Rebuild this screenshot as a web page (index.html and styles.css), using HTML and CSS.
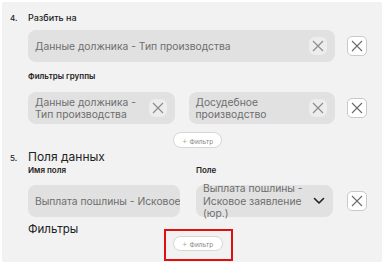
FILE: index.html
```html
<!DOCTYPE html>
<html lang="ru">
<head>
    <meta charset="UTF-8">
    <title>Группировка</title>
    <link rel="stylesheet" href="styles.css">
</head>
<body>
    <div class="panel">
        <!-- Разбить на -->
        <div class="step-title small">
            <span class="step-num">4.</span>
            <span>Разбить на</span>
        </div>
        <div class="field-row">
            <div class="select wide">
                <span class="select-text">Данные должника - Тип производства</span>
                <span class="chip-x"><svg width="18" height="18" viewBox="0 0 18 18"><path d="M4 4 L14 14 M14 4 L4 14" stroke="#8c8c8c" stroke-width="1.2"/></svg></span>
            </div>
            <button class="remove-btn"><svg width="18" height="18" viewBox="0 0 18 18"><path d="M4 4 L14 14 M14 4 L4 14" stroke="#6a6a6a" stroke-width="1.1"/></svg></button>
        </div>

        <div class="sub-label">Фильтры группы</div>
        <div class="field-row">
            <div class="pair">
                <div class="select">
                    <span class="select-text">Данные должника - Тип производства</span>
                    <span class="chip-x"><svg width="18" height="18" viewBox="0 0 18 18"><path d="M4 4 L14 14 M14 4 L4 14" stroke="#8c8c8c" stroke-width="1.2"/></svg></span>
                </div>
                <div class="select">
                    <span class="select-text">Досудебное производство</span>
                    <span class="chip-x"><svg width="18" height="18" viewBox="0 0 18 18"><path d="M4 4 L14 14 M14 4 L4 14" stroke="#8c8c8c" stroke-width="1.2"/></svg></span>
                </div>
            </div>
            <button class="remove-btn"><svg width="18" height="18" viewBox="0 0 18 18"><path d="M4 4 L14 14 M14 4 L4 14" stroke="#6a6a6a" stroke-width="1.1"/></svg></button>
        </div>
        <div class="add-wrap first">
            <button class="add-btn"><span class="plus">+</span> Фильтр</button>
        </div>

        <!-- Поля данных -->
        <div class="step-title big">
            <span class="step-num">5.</span>
            <span>Поля данных</span>
        </div>
        <div class="data-grid">
            <div class="sub-label">Имя поля</div>
            <div class="sub-label">Поле</div>
            <div></div>
            <div class="select input">
                <span class="input-text">Выплата пошлины - Исковое заявление (юр.)</span>
            </div>
            <div class="select tall">
                <span class="select-text">Выплата пошлины - Исковое заявление (юр.)</span>
                <svg class="chevron" width="12" height="8" viewBox="0 0 12 8">
                    <path d="M1.5 1.5 L6 6 L10.5 1.5" fill="none" stroke="#222" stroke-width="1.6" stroke-linecap="round" stroke-linejoin="round"/>
                </svg>
            </div>
            <button class="remove-btn"><svg width="18" height="18" viewBox="0 0 18 18"><path d="M4 4 L14 14 M14 4 L4 14" stroke="#6a6a6a" stroke-width="1.1"/></svg></button>
        </div>

        <div class="filters-title">Фильтры</div>
        <div class="add-wrap">
            <button class="add-btn marked"><span class="plus">+</span> Фильтр</button>
        </div>
    </div>
</body>
</html>
```
FILE: styles.css
```css
body {
    margin: 0;
    background-color: #ffffff;
    font-family: Inter, "Noto Sans", sans-serif;
    color: #222;
}

.panel {
    margin: 2px 0 0 2px;
    height: 260px;
    background-color: #f2f2f2;
    padding: 10px 15px 0 8px;
    box-sizing: border-box;
    overflow: hidden;
}

.step-title {
    display: flex;
    align-items: baseline;
}

.step-num {
    width: 18px;
    font-size: 8px;
    font-weight: 500;
}

.step-title.small {
    font-size: 9px;
    line-height: 12px;
    font-weight: 500;
}

.step-title.big {
    margin-top: 2px;
    font-size: 12px;
    line-height: 13px;
}

.sub-label {
    font-size: 8px;
    line-height: 10px;
    font-weight: 600;
    margin-left: 18px;
}

.field-row {
    display: flex;
    align-items: center;
    margin-left: 18px;
    gap: 12px;
}

.field-row + .sub-label {
    margin-top: 9px;
}

.step-title.small + .field-row {
    margin-top: 6px;
}

.sub-label + .field-row {
    margin-top: 11px;
}

.select {
    display: flex;
    align-items: center;
    height: 32px;
    padding: 0 8px 0 7px;
    box-sizing: border-box;
    background-color: #e1e1e1;
    border-radius: 8px;
    color: #6e6e6e;
    font-size: 10.3px;
    line-height: 12px;
}

.select.wide {
    width: 307px;
}

.select.tall {
    line-height: 12.5px;
}

.select-text {
    flex: 1;
}

.pair {
    display: flex;
    gap: 14px;
    width: 307px;
}

.pair .select {
    flex: 1;
}

.chip-x {
    display: flex;
    width: 18px;
    height: 18px;
    border-radius: 6px;
    background-color: #ededed;
}

.remove-btn {
    display: flex;
    align-items: center;
    justify-content: center;
    width: 20px;
    height: 20px;
    padding: 0;
    border: 1px solid #c9c9c9;
    border-radius: 5px;
    background-color: #fff;
}

.add-wrap {
    display: flex;
    justify-content: center;
    margin-left: 18px;
    width: 339px;
}

.add-wrap.first {
    margin-top: 8px;
}

.add-btn {
    height: 16px;
    padding: 0 8px;
    border: 1px solid #d6d6d6;
    border-radius: 8px;
    background-color: #fff;
    color: #888;
    font-size: 6.5px;
    font-family: inherit;
}

.plus {
    font-size: 9px;
    color: #aaa;
    font-weight: 300;
}

.add-btn.marked {
    position: relative;
    width: 50px;
    height: 15px;
}

.add-btn.marked::after {
    content: "";
    position: absolute;
    top: -8px;
    left: -10px;
    right: -11px;
    bottom: -11px;
    border: 2px solid #e01010;
}

.data-grid {
    display: grid;
    grid-template-columns: 152px 137px 20px;
    column-gap: 16px;
    align-items: center;
    margin-left: 18px;
}

.data-grid .sub-label {
    margin-left: 0;
    margin-bottom: 10px;
}

.data-grid .remove-btn {
    margin-left: -2px;
}

.input {
    overflow: hidden;
}

.input-text {
    white-space: nowrap;
}

.chevron {
    margin-left: 6px;
}

.filters-title {
    margin: 6px 0 0 18px;
    font-size: 11.5px;
    line-height: 13px;
}

.filters-title + .add-wrap {
    margin-top: 0;
}
```
